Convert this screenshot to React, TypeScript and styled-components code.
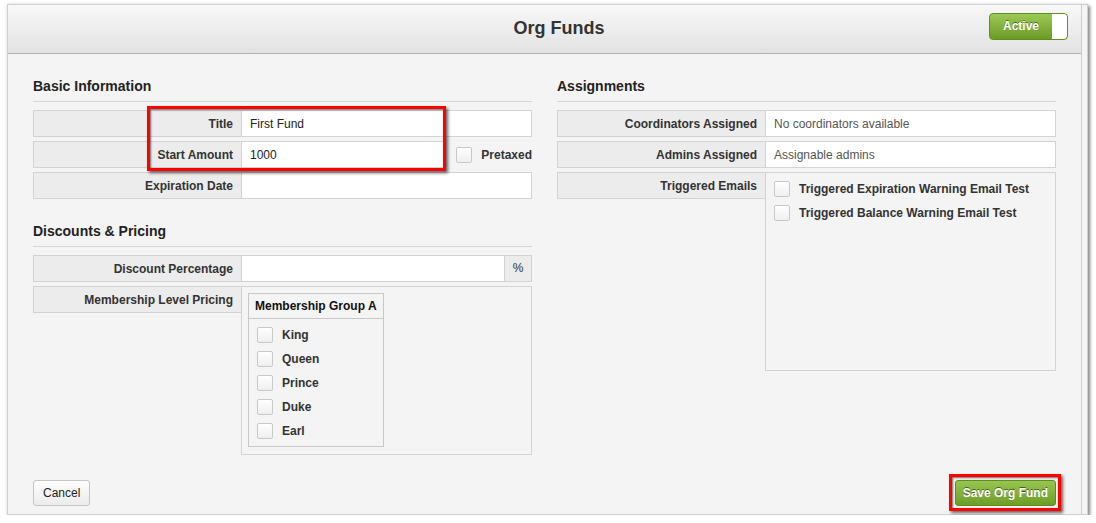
import styled, { createGlobalStyle } from "styled-components";

const GlobalStyle = createGlobalStyle`
  body {
    margin: 0;
    background: #fff;
    font-family: "Liberation Sans", Arial, sans-serif;
    color: #333;
  }
`;

const Dialog = styled.div`
  margin: 4px 0 0 7px;
  width: 1081px;
  box-sizing: border-box;
  padding-right: 5px;
  background: #f4f4f4;
  border: 1px solid #cfcfcf;
  box-shadow: 2px 2px 3px rgba(0, 0, 0, 0.45), 0 0 6px rgba(0, 0, 0, 0.08);
`;

const Frame = styled.div`
  border-right: 1px solid #cdcdcd;
`;

const Header = styled.header`
  display: grid;
  grid-template-columns: 1fr auto 1fr;
  align-items: center;
  height: 48px;
  padding-left: 29px;
  background: linear-gradient(#f8f8f8, #e2e2e2);
  border-bottom: 1px solid #b3b3b3;
`;

const DialogTitle = styled.h1`
  grid-column: 2;
  margin: -2px 0 0;
  font-size: 18px;
  font-weight: bold;
  color: #333;
`;

const Toggle = styled.div`
  grid-column: 3;
  justify-self: end;
  align-self: start;
  display: flex;
  margin: 8px 13px 0 0;
  width: 79px;
  height: 27px;
  box-sizing: border-box;
  border: 1px solid #5f8f1f;
  border-radius: 4px;
  background: linear-gradient(#9dc957, #6c9a25);
  overflow: hidden;
`;

const ToggleText = styled.span`
  flex: 1;
  text-align: center;
  line-height: 25px;
  font-size: 12px;
  font-weight: bold;
  color: #fff;
  text-shadow: 0 -1px 0 rgba(0, 0, 0, 0.45);
`;

const ToggleKnob = styled.span`
  width: 15px;
  background: #fff;
  border-radius: 0 3px 3px 0;
`;

const Body = styled.div`
  padding: 24px 25px 8px;
`;

const Columns = styled.div`
  display: grid;
  grid-template-columns: 499px 499px;
  column-gap: 25px;
  align-items: start;
`;

const Section = styled.section`
  & + & {
    margin-top: 24px;
  }
`;

const SectionTitle = styled.h3`
  margin: 0 0 8px;
  padding-bottom: 7px;
  border-bottom: 1px solid #d6d6d6;
  font-size: 14px;
  line-height: 16px;
  font-weight: bold;
  color: #222;
`;

const Fields = styled.div`
  position: relative;
  display: flex;
  flex-direction: column;
  gap: 4px;
`;

const Row = styled.div`
  display: grid;
  grid-template-columns: 208px 1fr;
  align-items: start;
`;

const Label = styled.div`
  height: 27px;
  box-sizing: border-box;
  padding: 1px 8px 0;
  border: 1px solid #d3d3d3;
  border-right: none;
  background: #ececec;
  text-align: right;
  line-height: 24px;
  font-size: 12px;
  font-weight: bold;
  color: #333;
`;

const Control = styled.div`
  display: flex;
  align-items: center;
`;

const Input = styled.div<{ muted?: boolean }>`
  flex: 1;
  height: 27px;
  box-sizing: border-box;
  padding: 1px 8px 0;
  border: 1px solid #d3d3d3;
  background: #fff;
  line-height: 24px;
  font-size: 12px;
  color: ${(p) => (p.muted ? "#555" : "#222")};
`;

const Addon = styled.span`
  width: 27px;
  height: 27px;
  box-sizing: border-box;
  border: 1px solid #d3d3d3;
  border-left: none;
  background: #ececec;
  text-align: center;
  line-height: 25px;
  font-size: 12px;
  color: #333;
`;

const Check = styled.label<{ inset?: number }>`
  display: flex;
  align-items: center;
  gap: 9px;
  height: 24px;
  margin-left: ${(p) => p.inset ?? 0}px;
  font-size: 12px;
  font-weight: bold;
  color: #333;
`;

const Box = styled.span`
  width: 16px;
  height: 16px;
  box-sizing: border-box;
  border: 1px solid #c9c9c9;
  border-radius: 2px;
  background: linear-gradient(#fff, #efefef);
`;

const Panel = styled.div<{ h?: number }>`
  box-sizing: border-box;
  height: ${(p) => (p.h ? `${p.h}px` : "auto")};
  border: 1px solid #d3d3d3;
  background: #f4f4f4;
`;

const PricingPanel = styled(Panel)`
  padding: 6px 7px 7px 6px;
`;

const EmailPanel = styled(Panel)`
  padding: 4px 8px;
`;

const GroupTable = styled.div`
  width: fit-content;
  border: 1px solid #c8c8c8;
`;

const GroupHead = styled.div`
  padding: 0 6px;
  line-height: 24px;
  border-bottom: 1px solid #c8c8c8;
  font-size: 12px;
  font-weight: bold;
  color: #111;
`;

const GroupList = styled.div`
  padding: 4px 8px 3px;
`;

const Footer = styled.footer`
  display: flex;
  justify-content: space-between;
  margin-top: 25px;
`;

const Button = styled.button`
  height: 26px;
  padding: 0 9px;
  border: 1px solid #c4c4c4;
  border-radius: 3px;
  background: linear-gradient(#fdfdfd, #ececec);
  font-family: inherit;
  font-size: 12px;
  color: #222;
`;

const SaveWrap = styled.div`
  position: relative;
`;

const SaveButton = styled(Button)`
  padding: 0 7px;
  border-color: #5d8b1e;
  background: linear-gradient(#98c54f, #6e9c28);
  font-weight: bold;
  color: #fff;
  text-shadow: 0 -1px 0 rgba(0, 0, 0, 0.5);
`;

// red callout frame drawn over the fields it points out
const Callout = styled.span<{ top: number; left: number; w?: number; h?: number }>`
  position: absolute;
  top: ${(p) => p.top}px;
  left: ${(p) => p.left}px;
  ${(p) => (p.w ? `width: ${p.w}px;` : "right: -5px;")}
  ${(p) => (p.h ? `height: ${p.h}px;` : "bottom: -5px;")}
  box-sizing: border-box;
  border: 3px solid #f00;
  box-shadow: 2px 2px 3px rgba(0, 0, 0, 0.6), inset 1px 1px 2px rgba(0, 0, 0, 0.55);
  pointer-events: none;
`;

const tiers = ["King", "Queen", "Prince", "Duke", "Earl"];

export default function App() {
  return (
    <>
      <GlobalStyle />
      <Dialog>
        <Frame>
          <Header>
            <DialogTitle>Org Funds</DialogTitle>
            <Toggle>
              <ToggleText>Active</ToggleText>
              <ToggleKnob />
            </Toggle>
          </Header>
          <Body>
            <Columns>
              <div>
                <Section>
                  <SectionTitle>Basic Information</SectionTitle>
                  <Fields>
                    <Row>
                      <Label>Title</Label>
                      <Input>First Fund</Input>
                    </Row>
                    <Row>
                      <Label>Start Amount</Label>
                      <Control>
                        <Input>1000</Input>
                        <Check inset={10}>
                          <Box />
                          Pretaxed
                        </Check>
                      </Control>
                    </Row>
                    <Row>
                      <Label>Expiration Date</Label>
                      <Input />
                    </Row>
                    <Callout top={-4} left={114} w={299} h={65} />
                  </Fields>
                </Section>
                <Section>
                  <SectionTitle>Discounts &amp; Pricing</SectionTitle>
                  <Fields>
                    <Row>
                      <Label>Discount Percentage</Label>
                      <Control>
                        <Input />
                        <Addon>%</Addon>
                      </Control>
                    </Row>
                    <Row>
                      <Label>Membership Level Pricing</Label>
                      <PricingPanel>
                        <GroupTable>
                          <GroupHead>Membership Group A</GroupHead>
                          <GroupList>
                            {tiers.map((t) => (
                              <Check key={t}>
                                <Box />
                                {t}
                              </Check>
                            ))}
                          </GroupList>
                        </GroupTable>
                      </PricingPanel>
                    </Row>
                  </Fields>
                </Section>
              </div>
              <div>
                <Section>
                  <SectionTitle>Assignments</SectionTitle>
                  <Fields>
                    <Row>
                      <Label>Coordinators Assigned</Label>
                      <Input muted>No coordinators available</Input>
                    </Row>
                    <Row>
                      <Label>Admins Assigned</Label>
                      <Input muted>Assignable admins</Input>
                    </Row>
                    <Row>
                      <Label>Triggered Emails</Label>
                      <EmailPanel h={199}>
                        <Check>
                          <Box />
                          Triggered Expiration Warning Email Test
                        </Check>
                        <Check>
                          <Box />
                          Triggered Balance Warning Email Test
                        </Check>
                      </EmailPanel>
                    </Row>
                  </Fields>
                </Section>
              </div>
            </Columns>
            <Footer>
              <Button>Cancel</Button>
              <SaveWrap>
                <SaveButton>Save Org Fund</SaveButton>
                <Callout top={-6} left={-6} />
              </SaveWrap>
            </Footer>
          </Body>
        </Frame>
      </Dialog>
    </>
  );
}
